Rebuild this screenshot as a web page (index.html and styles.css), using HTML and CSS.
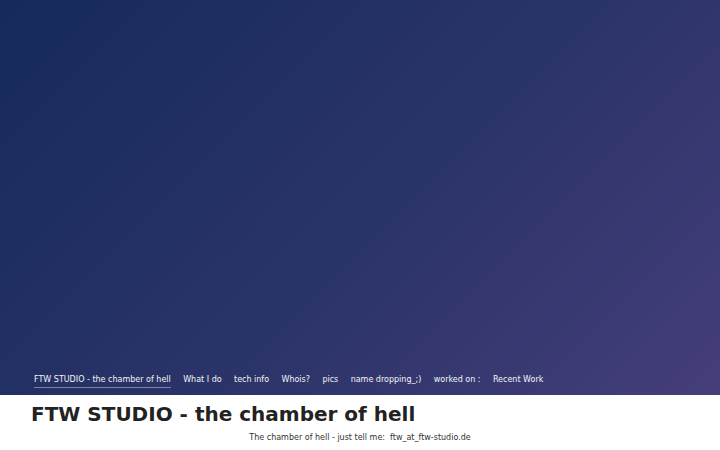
FILE: index.html
```html
<!DOCTYPE html>
<html lang="en">
<head>
<meta charset="utf-8">
<title>FTW STUDIO - the chamber of hell</title>
<link rel="stylesheet" href="styles.css">
</head>
<body>
<header class="hero">
  <nav class="nav">
    <a class="nav-link active" href="#">FTW STUDIO - the chamber of hell</a>
    <a class="nav-link" href="#">What I do</a>
    <a class="nav-link" href="#">tech info</a>
    <a class="nav-link" href="#">Whois?</a>
    <a class="nav-link" href="#">pics</a>
    <a class="nav-link" href="#">name dropping_;)</a>
    <a class="nav-link" href="#">worked on :</a>
    <a class="nav-link" href="#">Recent Work</a>
  </nav>
</header>
<main class="content">
  <h1 class="title">FTW STUDIO - the chamber of hell</h1>
  <p class="subtitle">The chamber of hell - just tell me:&nbsp; ftw_at_ftw-studio.de</p>
</main>
</body>
</html>
```
FILE: styles.css
```css
html, body {
  margin: 0;
  padding: 0;
  background: #ffffff;
  font-family: "DejaVu Sans", sans-serif;
}
.hero {
  height: 395px;
  background: linear-gradient(135deg, #162a5c 0%, #2b3468 55%, #453e7b 100%);
  display: flex;
  flex-direction: column;
  justify-content: flex-end;
  box-sizing: border-box;
  padding: 0 0 7px 34px;
}
.nav {
  display: flex;
  gap: 12.4px;
  align-items: flex-end;
}
.nav-link {
  color: #f4f4f8;
  text-decoration: none;
  font-size: 8px;
  line-height: 11px;
  padding-bottom: 2px;
  border-bottom: 1px solid transparent;
}
.nav-link.active {
  border-bottom-color: rgba(255, 255, 255, 0.4);
}
.content {
  padding: 0 31px;
}
.title {
  margin: 7px 0 0;
  font-size: 20px;
  line-height: 24px;
  font-weight: bold;
  color: #222222;
}
.subtitle {
  margin: 6px 0 0;
  text-align: center;
  font-size: 8px;
  line-height: 11px;
  color: #333333;
}
```
